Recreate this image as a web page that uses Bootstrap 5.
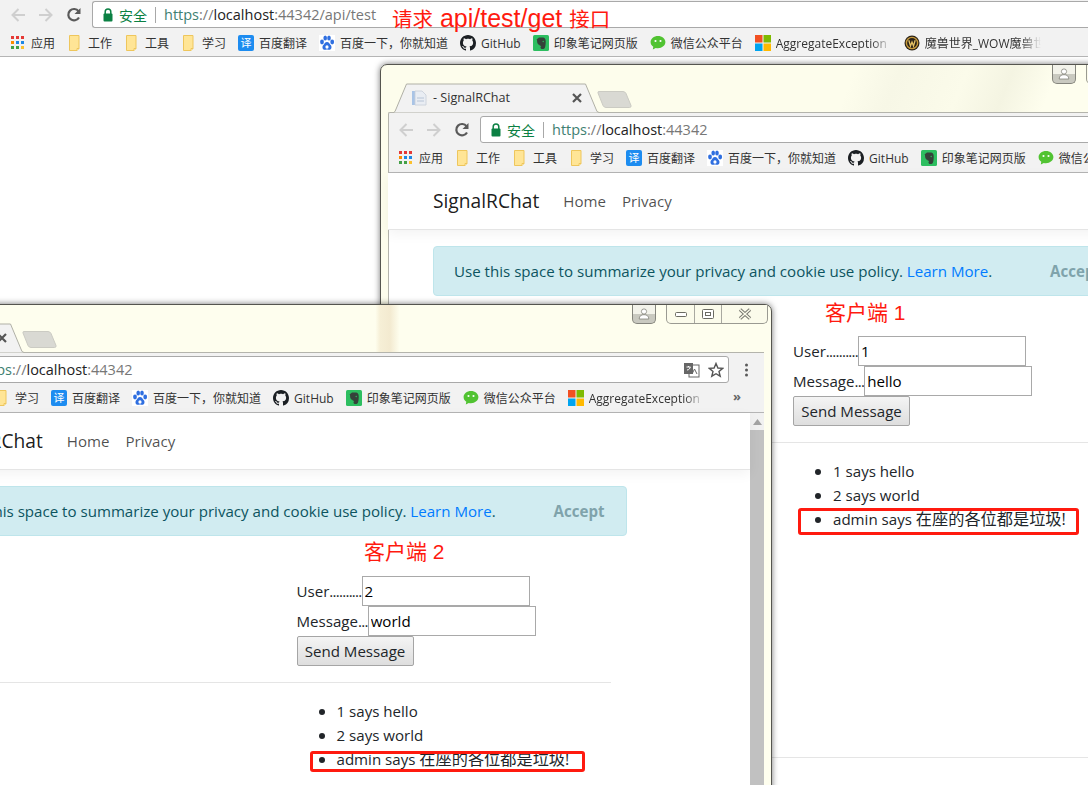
<!DOCTYPE html>
<html lang="zh-CN">
<head>
<meta charset="utf-8">
<title>SignalRChat</title>
<link href="https://cdn.jsdelivr.net/npm/bootstrap@5.3.0/dist/css/bootstrap.min.css" rel="stylesheet">
<style>
html,body{height:785px;overflow:hidden;background:#fff;}
body{position:relative;font-family:"Open Sans","Noto Sans CJK SC",sans-serif;font-size:15.1px;color:#212529;}
.toolbar{display:flex;align-items:center;background:#f2f2f2;padding-left:10px;}
.tb-top{height:29px;}
.tb-win{height:33px;padding-top:1px;padding-left:9px;border-top:1px solid #b4b4ac;border-left:1px solid #b4b4ac;border-top-left-radius:2px;}
.navbtn{width:16px;height:16px;margin-right:12px;flex:none;}
.navbtn-last{margin-right:10px;}
.urlbox{flex:1 1 auto;height:27px;display:flex;align-items:center;background:#fff;border:1px solid #a9a9a9;border-radius:3px;padding-left:9px;font-size:14.5px;line-height:1;white-space:nowrap;min-width:0;}
.tb-top .urlbox{border-right:0;border-radius:3px 0 0 3px;}
.sec{color:#0b8043;font-size:14px;margin-left:5px;padding-top:2px;}
.urlsep{width:1px;height:16px;background:#a8a8a8;margin:0 8px 0 8px;}
.urltxt{padding-top:2px;}
.u-s{color:#3f7f72;}.u-g{color:#777;}.u-k{color:#222;}
.bmbar{display:flex;align-items:center;gap:12px;height:28px;background:#f2f2f2;padding:2px 0 0 10px;font-size:12px;color:#333;white-space:nowrap;overflow:hidden;border-bottom:1px solid #b5b5b5;}
.win .bmbar{padding-left:9px;padding-top:1px;border-left:1px solid #b4b4ac;}
.bm{display:flex;align-items:center;gap:5px;flex:none;}
.bmi{width:16px;height:16px;flex:none;margin-top:-2px;}
.yi{width:16px;height:16px;margin-top:-2px;background:#1d8cf0;color:#fff;border-radius:2px;font-size:11px;line-height:16px;text-align:center;flex:none;}
.fade-t{width:116px;overflow:hidden;-webkit-mask-image:linear-gradient(90deg,#000 82%,transparent);mask-image:linear-gradient(90deg,#000 82%,transparent);}
.more{margin-left:auto;margin-right:23px;margin-top:-5px;color:#666;font-weight:700;font-size:13px;}
.win{position:absolute;display:flex;flex-direction:column;height:800px;border:1px solid #55554f;border-radius:7px 7px 0 0;padding:0 7px;box-shadow:0 0 6px rgba(0,0,0,.55);}
.win-a{left:380px;top:64px;width:812px;background:linear-gradient(112deg,#fdfdec 42%,#f7f7e6 46%,#fbfbea 52%,#f4f4e2 56%,#fefeee 60%);}
.win-b{left:-195px;top:304px;width:967px;background:linear-gradient(90deg,#fefeee 59%,#f6efd6 59.5%,#f3ead0 60.5%,#fefeee 61.5%);}
.strip{height:47px;display:flex;flex:none;padding-left:5px;margin-right:-4px;}
.tab-on{position:relative;width:207px;height:29px;margin-top:18px;display:flex;align-items:center;padding-left:18px;font-size:12.6px;color:#333;z-index:1;flex:none;}
.tabshape{position:absolute;left:0;top:0;width:207px;height:30px;}
.tab-in{position:relative;display:flex;align-items:center;width:171px;padding-top:1px;}
.tab-ico{width:16px;height:16px;margin-right:6px;flex:none;}
.tab-x{margin-left:auto;width:10px;height:10px;}
.tab-off{width:35px;height:19px;margin:25px 0 0 -3px;flex:none;}
.winbtns{display:flex;align-items:flex-start;gap:10px;margin-left:auto;}
.userbtn{width:24px;height:19px;border:1px solid #85857d;border-top:0;border-radius:0 0 5px 5px;background:linear-gradient(#f3f3ea 50%,#c9c9c0 50%);display:flex;justify-content:center;align-items:center;}
.ctrls{display:flex;width:102px;height:19px;border:1px solid #9a9a92;border-top:0;border-radius:0 0 5px 5px;background:#fbfbeb;}
.ctrls span{display:flex;justify-content:center;align-items:center;border-right:1px solid #a8a8a0;}
.c-min{width:28px;}.c-max{width:27px;}.ctrls .c-cls{flex:1;border-right:0;}
.viewport{flex:1 1 auto;display:flex;background:#fff;min-height:0;box-shadow:inset 1px 0 #b4b4ac;}
.pagecol{flex:1 1 auto;min-width:0;line-height:24px;}
.vscroll{width:14px;flex:none;background:#f1f1f1;display:flex;flex-direction:column;align-items:center;}
.v-up{height:17px;display:flex;align-items:center;}
.v-thumb{width:14px;flex:1;background:#c1c1c1;}
.vs-a{width:16px;}
.site-nav{height:57px;padding:0;background:#fff;border-bottom:1px solid #e5e5e5;box-shadow:0 4px 12px rgba(0,0,0,.05);margin-bottom:16px;}
.page-box{width:720px;margin:0 auto;padding:0 15px;}
.site-nav .page-box{padding-top:0;}
.site-nav .navbar-brand{font-size:19.2px;padding:0;margin:0 16px 0 0;color:rgba(0,0,0,.9);line-height:30px;}
.site-nav .nav-link{color:rgba(0,0,0,.7);padding:0 8px;font-size:15.1px;}
.cookie{background:#d1ecf1;border:1px solid #bee5eb;color:#0c5460;border-radius:4px;padding:12px 21px 12px 20px;margin-bottom:40px;height:50px;white-space:nowrap;}
.cookie a{color:#007bff;text-decoration:none;}
.accept-t{font-weight:700;color:#7fa3ab;}
.grid30{--bs-gutter-x:30px;}
.fld{height:30px;display:flex;align-items:center;white-space:nowrap;}
.dots{letter-spacing:-.75px;}
.plain-in{width:168px;height:30px;border:1px solid #a9a9a9;padding:1px 2px;font:inherit;color:#000;border-radius:0;outline:0;}
.sendb{height:30px;width:117px;padding:0;font:inherit;color:#212529;border:1px solid #a5a5a5;border-radius:2px;background:linear-gradient(#f4f4f4,#dedede);line-height:26px;}
.rule{border:0;border-top:1px solid #e5e5e5;opacity:1;margin:16px 0;}
.msgs{margin:0;padding:0 0 0 40px;list-style:none;}
.msgs li::before{content:"";display:inline-block;width:6px;height:6px;border-radius:50%;background:#212529;margin:0 12px 2px -18px;vertical-align:middle;}
.zh16{font-size:16.2px;}
.footbar{border-top:1px solid #e5e5e5;margin-top:226px;height:40px;}
.note{position:absolute;color:#ff1a0f;white-space:nowrap;line-height:1;font-family:"Liberation Sans","Noto Sans CJK SC",sans-serif;z-index:5;}
.note-a{left:392px;top:6px;font-size:25px;}
.note-a .zh{font-size:20.5px;}
.note-b{left:825px;top:302px;font-size:21px;}
.note-c{left:364px;top:541px;font-size:21px;}
.redbox{position:absolute;border:3px solid #ff1a0f;border-radius:3px;z-index:5;}
.rb-a{left:798px;top:508px;width:281px;height:27px;}
.rb-b{left:310px;top:751px;width:275px;height:21px;}
</style>
</head>
<body>
<svg width="0" height="0" class="d-block position-absolute">
<defs>
<symbol id="back" viewBox="0 0 16 16"><path d="M15 8H3M8.500 2 2.500 8l6 6" fill="none" stroke="#cfcfcf" stroke-width="2"/></symbol>
<symbol id="fwd" viewBox="0 0 16 16"><path d="M1 8h12M7.500 2l6 6-6 6" fill="none" stroke="#cfcfcf" stroke-width="2"/></symbol>
<symbol id="reload" viewBox="0 0 16 16"><path d="M13 10.500A5.700 5.700 0 1 1 12.600 4.300" fill="none" stroke="#5a5a5a" stroke-width="2.200"/><path d="M14.500 1v6h-6z" fill="#5a5a5a"/></symbol>
<symbol id="lock" viewBox="0 0 12 16"><path d="M3.200 7V4.800a2.800 2.800 0 0 1 5.600 0V7" fill="none" stroke="#0b8043" stroke-width="1.500"/><rect x="1.500" y="6.500" width="9" height="8" rx="1" fill="#0b8043"/></symbol>
<symbol id="apps" viewBox="0 0 16 16"><g><rect x="1" y="1" width="3" height="3" fill="#e53935"/><rect x="6" y="1" width="3" height="3" fill="#e53935"/><rect x="11" y="1" width="3" height="3" fill="#e53935"/><rect x="1" y="6" width="3" height="3" fill="#fb8c00"/><rect x="6" y="6" width="3" height="3" fill="#1e88e5"/><rect x="11" y="6" width="3" height="3" fill="#1e88e5"/><rect x="1" y="11" width="3" height="3" fill="#43a047"/><rect x="6" y="11" width="3" height="3" fill="#43a047"/><rect x="11" y="11" width="3" height="3" fill="#fbc02d"/></g></symbol>
<symbol id="folder" viewBox="0 0 16 16"><path d="M2.500 .5h9.500v13l-2 2H2.500z" fill="#ffe596" stroke="#eec65c"/><path d="M10 15.500v-2h2" fill="#fff3c4" stroke="#eec65c"/></symbol>
<symbol id="paw" viewBox="0 0 16 16"><rect width="16" height="16" fill="#fff"/><g fill="#2f6fe0"><ellipse cx="3" cy="7" rx="1.900" ry="2.400"/><ellipse cx="6.200" cy="3" rx="1.800" ry="2.500"/><ellipse cx="10" cy="3" rx="1.800" ry="2.500"/><ellipse cx="13.200" cy="7" rx="1.900" ry="2.400"/><path d="M8 7c-2 0-2.400 1.900-3.600 2.900C3 11 3 14.800 6 14.800c1 0 1.300-.4 2-.4s1.100.4 2 .4c3 0 3-3.800 1.600-4.900C10.400 8.900 10 7 8 7z"/></g><ellipse cx="8" cy="12" rx="1.600" ry="1.800" fill="#fff"/></symbol>
<symbol id="gh" viewBox="0 0 16 16"><path fill="#1b1f23" d="M8 0C3.580 0 0 3.580 0 8c0 3.540 2.290 6.530 5.470 7.590.4.070.55-.17.55-.38 0-.19-.01-.82-.01-1.490-2.010.37-2.530-.49-2.690-.94-.09-.23-.48-.94-.82-1.130-.28-.15-.68-.52-.01-.53.63-.01 1.080.58 1.230.82.72 1.210 1.870.87 2.330.66.07-.52.28-.87.51-1.070-1.780-.2-3.640-.89-3.640-3.950 0-.87.31-1.590.82-2.150-.08-.2-.36-1.020.08-2.120 0 0 .67-.21 2.200.82.64-.18 1.320-.27 2-.27.68 0 1.360.09 2 .27 1.530-1.040 2.200-.82 2.200-.82.44 1.100.16 1.920.08 2.120.51.56.82 1.270.82 2.150 0 3.070-1.870 3.750-3.650 3.950.29.25.54.73.54 1.480 0 1.070-.01 1.930-.01 2.200 0 .21.15.46.55.38A8.013 8.013 0 0 0 16 8c0-4.420-3.580-8-8-8z"/></symbol>
<symbol id="ever" viewBox="0 0 16 16"><rect width="16" height="16" rx="1.500" fill="#2dbe60"/><path d="M3.500 4.500 6 2.500h4c1.600 0 2.600 1.200 2.700 3.500.1 2.500-.2 5-.7 6.500-.4 1.200-1.300 1.500-2.500 1.500-1.500 0-2-.8-2-1.600 0-.9.7-1.300 1.500-1.300-1 0-2.200-.4-2.800-1.400-.7 0-2.200-.8-2.200-4.700z" fill="#35423a"/><circle cx="10.200" cy="6.500" r=".7" fill="#2dbe60"/></symbol>
<symbol id="wx" viewBox="0 0 16 16"><path d="M8 1C3.900 1 .6 3.700.6 7.100c0 1.900 1 3.600 2.700 4.700L2.800 14.600l3-1.700c.7.2 1.400.3 2.200.3 4.100 0 7.400-2.700 7.400-6.100S12.100 1 8 1z" fill="#51c332"/><circle cx="5.500" cy="6" r="1.050" fill="#fff"/><circle cx="10.500" cy="6" r="1.050" fill="#fff"/></symbol>
<symbol id="ms" viewBox="0 0 16 16"><rect width="7.500" height="7.500" fill="#f25022"/><rect x="8.500" width="7.500" height="7.500" fill="#7fba00"/><rect y="8.500" width="7.500" height="7.500" fill="#00a4ef"/><rect x="8.500" y="8.500" width="7.500" height="7.500" fill="#ffb900"/></symbol>
<symbol id="wow" viewBox="0 0 16 16"><circle cx="8" cy="8" r="7.500" fill="#2c2418"/><circle cx="8" cy="8" r="5.600" fill="none" stroke="#c79a3b" stroke-width="1.400"/><path d="M4.800 5.200 6.500 11l1.500-4 1.500 4 1.700-5.800" fill="none" stroke="#e7c365" stroke-width="1.300"/></symbol>
<symbol id="page" viewBox="0 0 16 16"><path d="M1 1h3v14H1z" fill="#a9c4e6"/><path d="M4 1h7l4 4v10H4z" fill="#e9edf3" stroke="#c7ced8" stroke-width=".8"/><path d="M6 8h7M6 11h7" stroke="#b7c4d6"/></symbol>
<symbol id="closex" viewBox="0 0 10 10"><path d="M1 1l8 8M9 1l-8 8" stroke="#555" stroke-width="2.200"/></symbol>
<symbol id="person" viewBox="0 0 12 12"><circle cx="6" cy="3.500" r="2.600" fill="#fff" stroke="#77776f" stroke-width=".7"/><path d="M1.200 11c0-3 2-4.300 4.800-4.300s4.800 1.300 4.800 4.300z" fill="#fff" stroke="#77776f" stroke-width=".7"/></symbol>
</defs>
</svg>

<header>
  <div class="toolbar tb-top">
    <svg class="navbtn"><use href="#back"/></svg>
    <svg class="navbtn"><use href="#fwd"/></svg>
    <svg class="navbtn navbtn-last"><use href="#reload"/></svg>
    <div class="urlbox">
      <svg width="12" height="16"><use href="#lock"/></svg>
      <span class="sec">安全</span><span class="urlsep"></span>
      <span class="urltxt"><span class="u-s">https</span><span class="u-g">://</span><span class="u-k">localhost</span><span class="u-g">:44342/api/test</span></span>
    </div>
  </div>
  <div class="bmbar">
    <span class="bm"><svg class="bmi"><use href="#apps"/></svg>应用</span>
    <span class="bm"><svg class="bmi"><use href="#folder"/></svg>工作</span>
    <span class="bm"><svg class="bmi"><use href="#folder"/></svg>工具</span>
    <span class="bm"><svg class="bmi"><use href="#folder"/></svg>学习</span>
    <span class="bm"><span class="yi">译</span>百度翻译</span>
    <span class="bm"><svg class="bmi"><use href="#paw"/></svg>百度一下，你就知道</span>
    <span class="bm"><svg class="bmi"><use href="#gh"/></svg>GitHub</span>
    <span class="bm"><svg class="bmi"><use href="#ever"/></svg>印象笔记网页版</span>
    <span class="bm"><svg class="bmi"><use href="#wx"/></svg>微信公众平台</span>
    <span class="bm"><svg class="bmi"><use href="#ms"/></svg><span class="fade-t">AggregateException</span></span>
    <span class="bm"><svg class="bmi"><use href="#wow"/></svg><span class="fade-t">魔兽世界_WOW魔兽世界</span></span>
  </div>
</header>

<section class="win win-a">
  <div class="strip">
    <div class="tab-on">
      <svg class="tabshape" viewBox="0 0 207 30"><path d="M0 30 2 28.500 13.500 1H192.500L204 28.500 207 30Z" fill="#f2f2f2" stroke="#b0b0a6"/></svg>
      <div class="tab-in"><svg class="tab-ico"><use href="#page"/></svg>- SignalRChat<svg class="tab-x"><use href="#closex"/></svg></div>
    </div>
    <svg class="tab-off" viewBox="0 0 35 19"><path d="M2 1.500h24q2 0 3 2l5 12q.5 2-1.500 2H9q-2 0-3-2L1 3q-.5-1.500 1-1.500z" fill="#d9d9d3" stroke="#cbcbc3"/></svg>
    <div class="winbtns">
      <div class="userbtn"><svg width="12" height="12"><use href="#person"/></svg></div>
      <div class="ctrls"><span class="c-min"></span><span class="c-max"></span><span class="c-cls"></span></div>
    </div>
  </div>
  <div class="toolbar tb-win">
    <svg class="navbtn"><use href="#back"/></svg>
    <svg class="navbtn"><use href="#fwd"/></svg>
    <svg class="navbtn navbtn-last"><use href="#reload"/></svg>
    <div class="urlbox me-5">
      <svg width="12" height="16"><use href="#lock"/></svg>
      <span class="sec">安全</span><span class="urlsep"></span>
      <span class="urltxt"><span class="u-s">https</span><span class="u-g">://</span><span class="u-k">localhost</span><span class="u-g">:44342</span></span>
    </div>
  </div>
  <div class="bmbar">
    <span class="bm"><svg class="bmi"><use href="#apps"/></svg>应用</span>
    <span class="bm"><svg class="bmi"><use href="#folder"/></svg>工作</span>
    <span class="bm"><svg class="bmi"><use href="#folder"/></svg>工具</span>
    <span class="bm"><svg class="bmi"><use href="#folder"/></svg>学习</span>
    <span class="bm"><span class="yi">译</span>百度翻译</span>
    <span class="bm"><svg class="bmi"><use href="#paw"/></svg>百度一下，你就知道</span>
    <span class="bm"><svg class="bmi"><use href="#gh"/></svg>GitHub</span>
    <span class="bm"><svg class="bmi"><use href="#ever"/></svg>印象笔记网页版</span>
    <span class="bm"><svg class="bmi"><use href="#wx"/></svg>微信公众平台</span>
  </div>
  <div class="viewport">
    <div class="pagecol">
      <nav class="navbar navbar-expand site-nav">
        <div class="page-box d-flex align-items-center">
          <a class="navbar-brand" href="#">SignalRChat</a>
          <ul class="navbar-nav flex-row">
            <li class="nav-item"><a class="nav-link" href="#">Home</a></li>
            <li class="nav-item"><a class="nav-link" href="#">Privacy</a></li>
          </ul>
        </div>
      </nav>
      <main class="page-box">
        <div class="cookie d-flex justify-content-between">
          <span>Use this space to summarize your privacy and cookie use policy. <a href="#">Learn More</a>.</span>
          <span class="accept-t">Accept</span>
        </div>
        <div class="row grid30">
          <div class="col-6 offset-6">
            <div class="fld"><span>User<span class="dots">..........</span></span><input class="plain-in" value="1"></div>
            <div class="fld"><span>Message<span class="dots">...</span></span><input class="plain-in" value="hello"></div>
            <div class="fld"><button class="sendb" type="button">Send Message</button></div>
          </div>
        </div>
        <div class="row grid30"><div class="col-12"><div class="px-3"><hr class="rule"></div></div></div>
        <div class="row grid30">
          <div class="col-6 offset-6">
            <ul class="msgs">
              <li>1 says hello</li>
              <li>2 says world</li>
              <li>admin says <span class="zh16">在座的各位都是垃圾!</span></li>
            </ul>
          </div>
        </div>
      </main>
      <div class="footbar"></div>
    </div>
    <div class="vscroll vs-a"></div>
  </div>
</section>

<section class="win win-b">
  <div class="strip">
    <div class="tab-on">
      <svg class="tabshape" viewBox="0 0 207 30"><path d="M0 30 2 28.500 13.500 1H192.500L204 28.500 207 30Z" fill="#f2f2f2" stroke="#b0b0a6"/></svg>
      <div class="tab-in"><svg class="tab-ico"><use href="#page"/></svg>- SignalRChat<svg class="tab-x"><use href="#closex"/></svg></div>
    </div>
    <svg class="tab-off" viewBox="0 0 35 19"><path d="M2 1.500h24q2 0 3 2l5 12q.5 2-1.500 2H9q-2 0-3-2L1 3q-.5-1.500 1-1.500z" fill="#d9d9d3" stroke="#cbcbc3"/></svg>
    <div class="winbtns">
      <div class="userbtn"><svg width="12" height="12"><use href="#person"/></svg></div>
      <div class="ctrls">
        <span class="c-min"><svg width="14" height="8"><rect x="1.500" y="2.500" width="11" height="4" rx="1" fill="#fff" stroke="#6a6a62"/></svg></span>
        <span class="c-max"><svg width="12" height="10"><rect x=".5" y=".5" width="11" height="9" rx="1" fill="#fff" stroke="#6a6a62"/><rect x="3.500" y="3.500" width="5" height="3" fill="none" stroke="#6a6a62"/></svg></span>
        <span class="c-cls"><svg width="14" height="12" viewBox="0 0 14 12"><path d="M2 1.500 12 10.500M12 1.500 2 10.500" stroke="#77776f" stroke-width="3.400"/><path d="M2 1.500 12 10.500M12 1.500 2 10.500" stroke="#fbfbeb" stroke-width="1.400"/></svg></span>
      </div>
    </div>
  </div>
  <div class="toolbar tb-win">
    <svg class="navbtn"><use href="#back"/></svg>
    <svg class="navbtn"><use href="#fwd"/></svg>
    <svg class="navbtn navbtn-last"><use href="#reload"/></svg>
    <div class="urlbox">
      <svg width="12" height="16"><use href="#lock"/></svg>
      <span class="sec">安全</span><span class="urlsep"></span>
      <span class="urltxt"><span class="u-s">https</span><span class="u-g">://</span><span class="u-k">localhost</span><span class="u-g">:44342</span></span>
      <svg class="ms-auto" width="16" height="16" viewBox="0 0 16 16"><rect x="5" y="3" width="10" height="12" fill="#fff" stroke="#666"/><rect x="0" y="1" width="9" height="11" fill="#666"/><path d="M2.500 5h4M4.500 4v1M3 8c2 0 3-1.500 3.200-3" stroke="#fff" fill="none"/><path d="M8 12l2.500-5 2.500 5" stroke="#666" fill="none"/></svg>
      <svg class="ms-2 me-1" width="16" height="16" viewBox="0 0 16 16"><path d="M8 1.500 9.900 6l4.800.4-3.700 3.100 1.200 4.700L8 11.700l-4.200 2.500L5 9.500 1.300 6.400 6.100 6z" fill="none" stroke="#555" stroke-width="1.400"/></svg>
    </div>
    <svg class="mx-2" width="19" height="16" viewBox="0 0 19 16"><g fill="#5a5a5a"><circle cx="9.500" cy="3" r="1.500"/><circle cx="9.500" cy="8" r="1.500"/><circle cx="9.500" cy="13" r="1.500"/></g></svg>
  </div>
  <div class="bmbar">
    <span class="bm"><svg class="bmi"><use href="#apps"/></svg>应用</span>
    <span class="bm"><svg class="bmi"><use href="#folder"/></svg>工作</span>
    <span class="bm"><svg class="bmi"><use href="#folder"/></svg>工具</span>
    <span class="bm"><svg class="bmi"><use href="#folder"/></svg>学习</span>
    <span class="bm"><span class="yi">译</span>百度翻译</span>
    <span class="bm"><svg class="bmi"><use href="#paw"/></svg>百度一下，你就知道</span>
    <span class="bm"><svg class="bmi"><use href="#gh"/></svg>GitHub</span>
    <span class="bm"><svg class="bmi"><use href="#ever"/></svg>印象笔记网页版</span>
    <span class="bm"><svg class="bmi"><use href="#wx"/></svg>微信公众平台</span>
    <span class="bm"><svg class="bmi"><use href="#ms"/></svg><span class="fade-t">AggregateException</span></span>
    <span class="more">»</span>
  </div>
  <div class="viewport">
    <div class="pagecol">
      <nav class="navbar navbar-expand site-nav">
        <div class="page-box d-flex align-items-center">
          <a class="navbar-brand" href="#">SignalRChat</a>
          <ul class="navbar-nav flex-row">
            <li class="nav-item"><a class="nav-link" href="#">Home</a></li>
            <li class="nav-item"><a class="nav-link" href="#">Privacy</a></li>
          </ul>
        </div>
      </nav>
      <main class="page-box">
        <div class="cookie d-flex justify-content-between">
          <span>Use this space to summarize your privacy and cookie use policy. <a href="#">Learn More</a>.</span>
          <span class="accept-t">Accept</span>
        </div>
        <div class="row grid30">
          <div class="col-6 offset-6">
            <div class="fld"><span>User<span class="dots">..........</span></span><input class="plain-in" value="2"></div>
            <div class="fld"><span>Message<span class="dots">...</span></span><input class="plain-in" value="world"></div>
            <div class="fld"><button class="sendb" type="button">Send Message</button></div>
          </div>
        </div>
        <div class="row grid30"><div class="col-12"><div class="px-3"><hr class="rule"></div></div></div>
        <div class="row grid30">
          <div class="col-6 offset-6">
            <ul class="msgs">
              <li>1 says hello</li>
              <li>2 says world</li>
              <li>admin says <span class="zh16">在座的各位都是垃圾!</span></li>
            </ul>
          </div>
        </div>
      </main>
    </div>
    <div class="vscroll">
      <div class="v-up"><svg width="9" height="6"><path d="M4.500 0 9 6H0z" fill="#a3a3a3"/></svg></div>
      <div class="v-thumb"></div>
    </div>
  </div>
</section>

<div class="note note-a"><span class="zh">请求</span> api/test/get <span class="zh">接口</span></div>
<div class="note note-b">客户端 1</div>
<div class="note note-c">客户端 2</div>
<div class="redbox rb-a"></div>
<div class="redbox rb-b"></div>
</body>
</html>
